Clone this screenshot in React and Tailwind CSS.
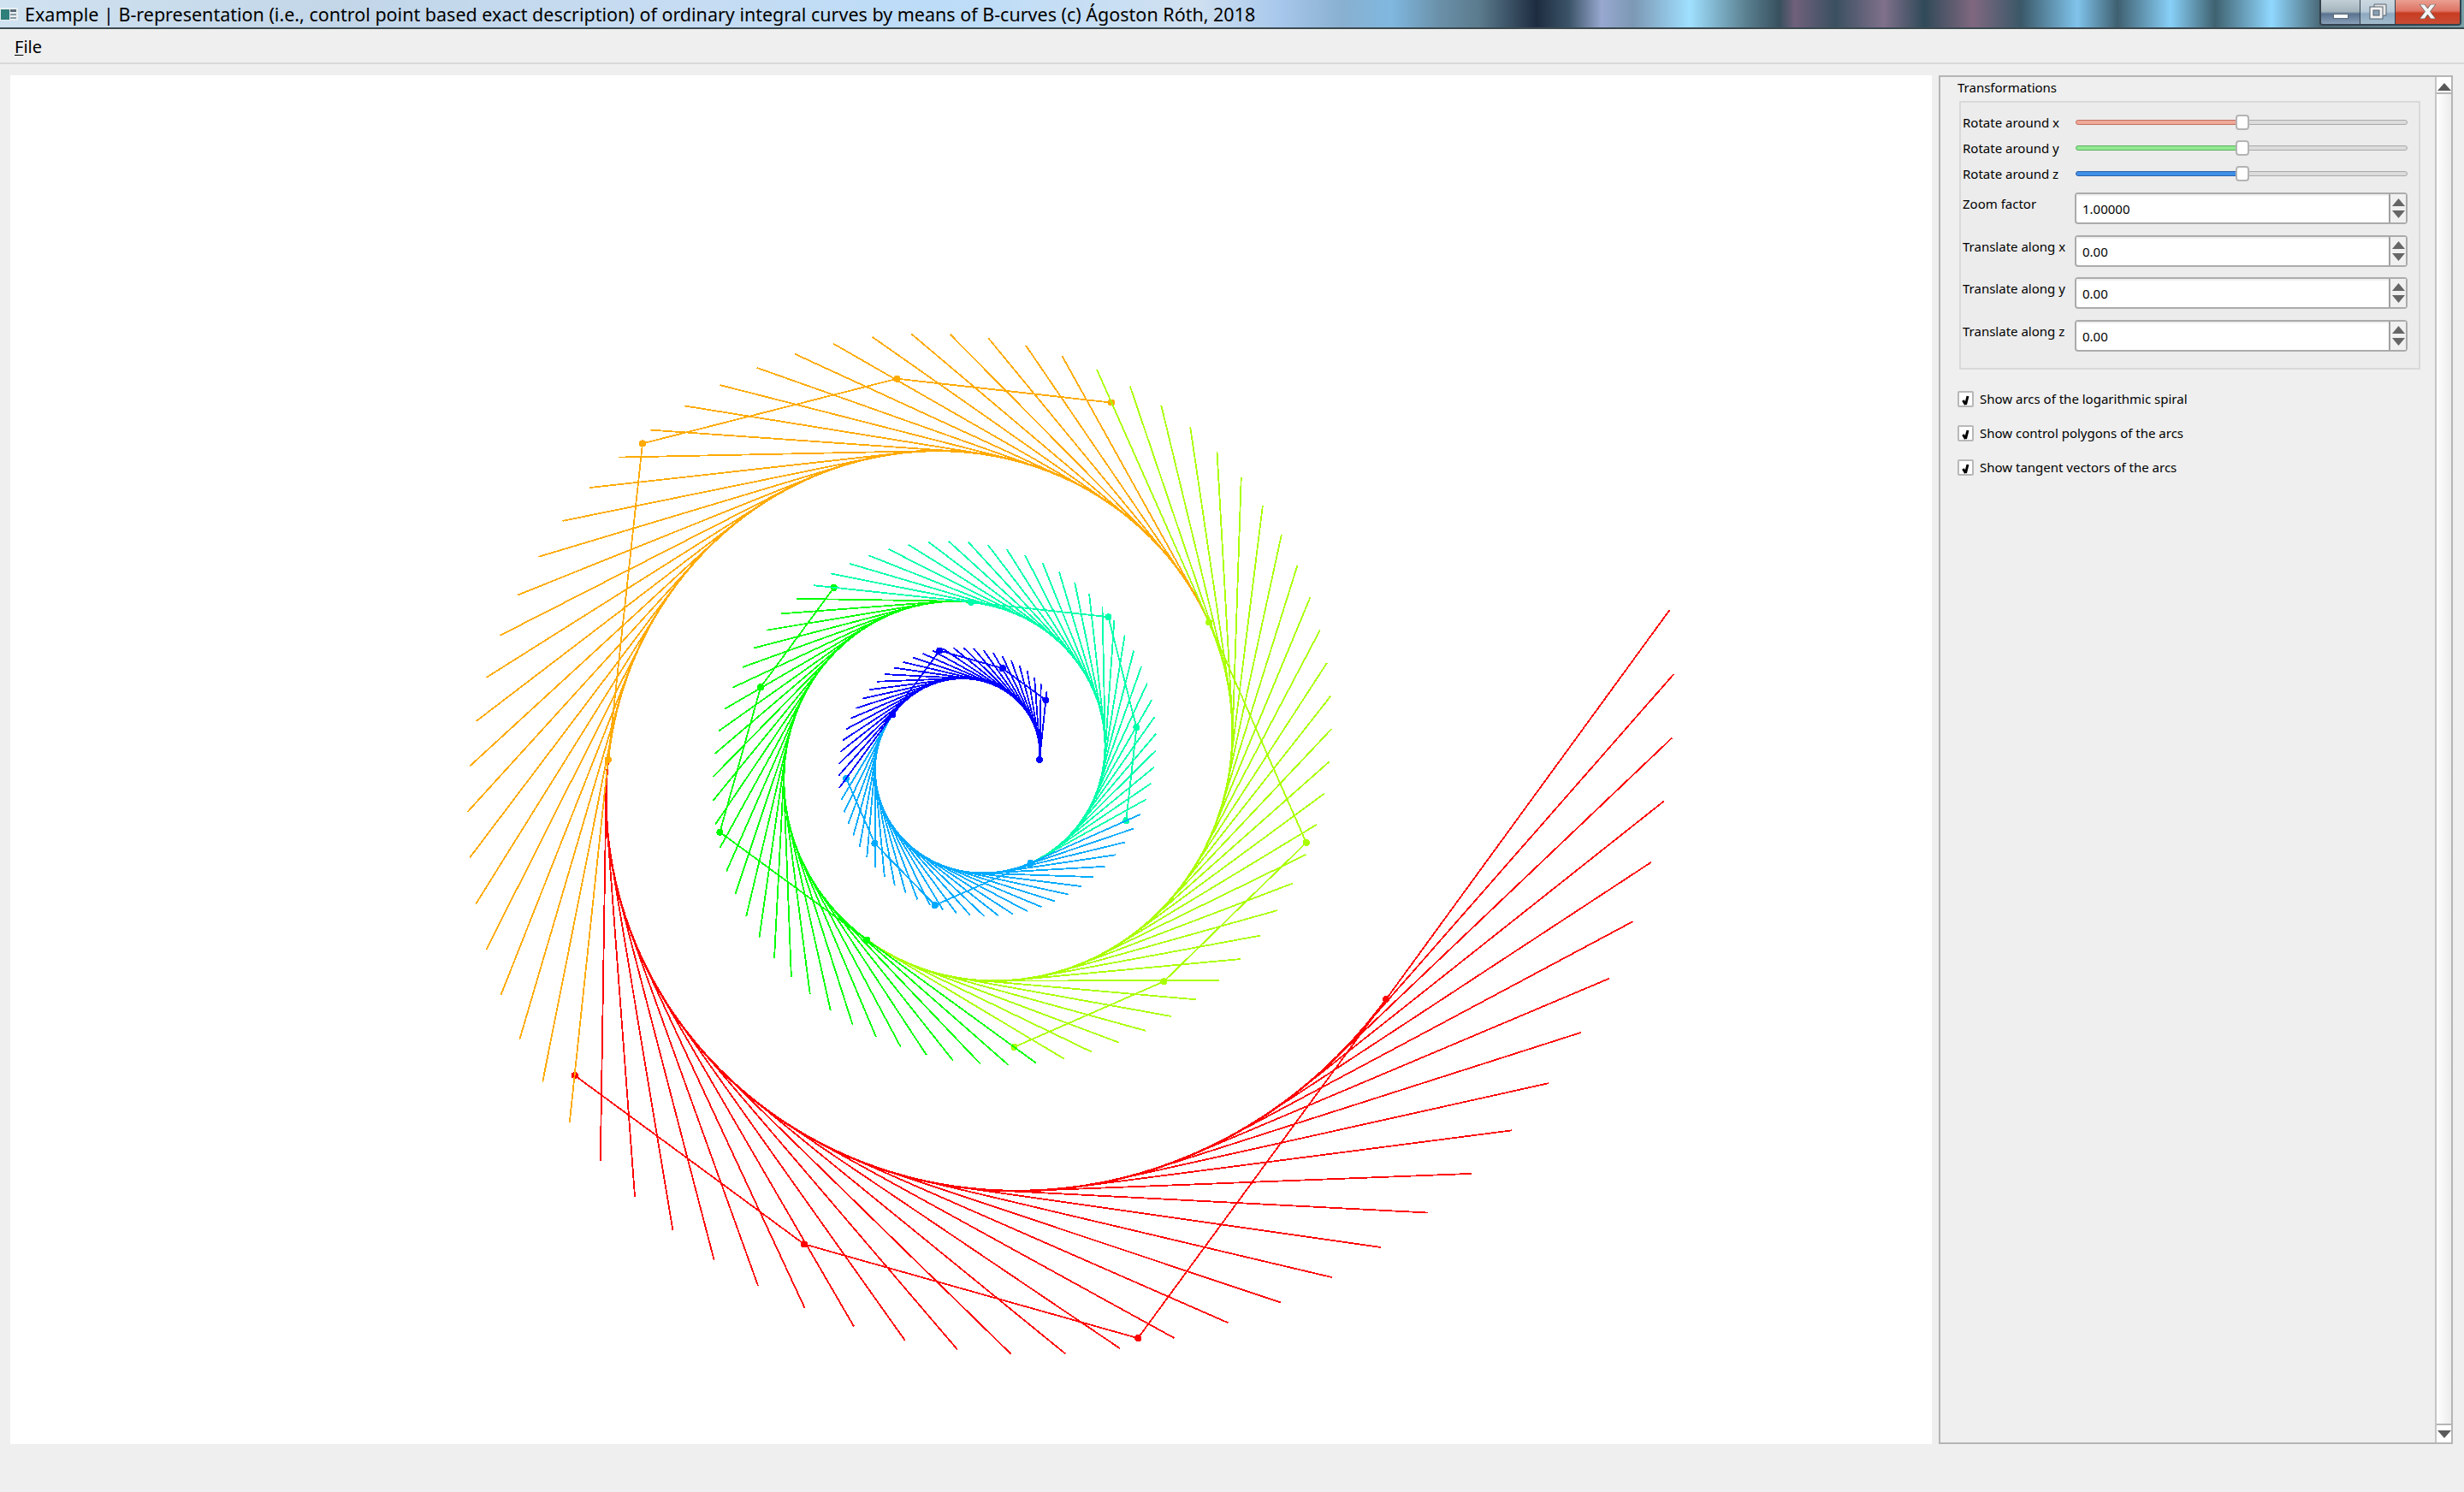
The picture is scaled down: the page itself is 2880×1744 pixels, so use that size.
import React from 'react';

const uiFont = "font-['Noto_Sans',sans-serif]";

// logarithmic spiral, one arc per 150 degrees
const CX = 1123;
const CY = 800;
const R0 = 80;
const B = 0.1062;
const STEP = (5 * Math.PI) / 6;
const SAMPLES = 29;
const arcColors = ['#0000ff', '#00aaff', '#00ffaa', '#00ff00', '#aaff00', '#ffaa00', '#ff0000'];
// control points of an arc, relative to its start point (complex factors)
const CTRL = [[1.092, -0.87], [0.46, -1.335], [-0.46, -1.594]];

const spiral = (t) => {
  const r = R0 * Math.exp(B * t);
  return [CX + r * Math.cos(t), CY - r * Math.sin(t)];
};

const tangent = (t) => {
  const r = R0 * Math.exp(B * t);
  return [r * (B * Math.cos(t) - Math.sin(t)), r * (-B * Math.sin(t) - Math.cos(t))];
};

const buildArc = (n) => {
  const t0 = n * STEP;
  const samples = [];
  for (let i = 0; i <= SAMPLES; i++) samples.push(t0 + (i * STEP) / SAMPLES);
  const fine = [];
  for (let i = 0; i <= 150; i++) fine.push(spiral(t0 + (i * STEP) / 150));
  const [sx, sy] = spiral(t0);
  const zx = sx - CX;
  const zy = sy - CY;
  const inner = CTRL.map(([a, b]) => [CX + zx * a - zy * b, CY + zx * b + zy * a]);
  return { samples, fine, polygon: [[sx, sy], ...inner, spiral(t0 + STEP)] };
};

const pts = (list) => list.map((p) => `${p[0].toFixed(1)},${p[1].toFixed(1)}`).join(' ');

const SpiralPlot = () => (
  <svg className="block w-full h-full" viewBox="0 0 2246 1600" shapeRendering="crispEdges" fill="none">
    {[6, 5, 4, 3, 2, 1, 0].map((n) => {
      const arc = buildArc(n);
      const color = arcColors[n];
      // first leg of a polygon lies under the last tangent of the arc before it
      const legs = n === 0 ? arc.polygon : arc.polygon.slice(1);
      return (
        <g key={n} stroke={color}>
          <polyline points={pts(arc.fine)} strokeWidth="2.5" />
          <polyline points={pts(legs)} strokeWidth="1.8" />
          {arc.samples.map((t, i) => {
            const [x, y] = spiral(t);
            const [dx, dy] = tangent(t);
            return <line key={i} x1={x} y1={y} x2={x + dx} y2={y + dy} strokeWidth="1.8" />;
          })}
          {arc.polygon.map((p, i) => (
            <circle key={i} cx={p[0]} cy={p[1]} r="4" fill={color} stroke="none" />
          ))}
        </g>
      );
    })}
  </svg>
);

const Slider = ({ fill, edge }) => (
  <div className="flex-1 flex items-center relative h-[18px]">
    <div className={`h-[6px] w-[189px] rounded-l-full border ${edge} ${fill}`} />
    <div className="h-[6px] flex-1 rounded-r-full border border-[#aaaaaa] bg-[#dcdcdc]" />
    <div className="absolute left-[187px] top-0 w-[16px] h-[18px] rounded-[4px] border-2 border-[#b4b4b4] bg-white" />
  </div>
);

const SpinBox = ({ value }) => (
  <div className="flex-1 h-[37px] flex rounded-[4px] border-2 border-[#ababab] bg-white">
    <div className="flex-1 pl-[7px] leading-[31px] text-[15px] text-black border-t-2 border-[#f0f0f0]">{value}</div>
    <div className="w-[20px] flex flex-col items-center justify-center gap-[5px] bg-[#f0f0f0] border-l-2 border-[#a0a0a0]">
      <svg width="15" height="9" viewBox="0 0 15 9"><path d="M7.5 0 15 9H0z" fill="#666" /></svg>
      <svg width="15" height="9" viewBox="0 0 15 9"><path d="M0 0h15L7.5 9z" fill="#666" /></svg>
    </div>
  </div>
);

const CheckRow = ({ label }) => (
  <div className="flex items-center h-[19px]">
    <div className="w-[19px] h-[19px] flex items-center justify-center border-2 border-[#b8b8b8] rounded-[2px] bg-white">
      <svg width="15" height="15" viewBox="0 0 15 15" fill="none">
        <path d="M4.500 9 7.500 14" stroke="#000" strokeWidth="3" />
        <path d="M7.500 14 10 4" stroke="#000" strokeWidth="3" />
      </svg>
    </div>
    <span className="ml-[7px] text-[15px] leading-[19px] text-black">{label}</span>
  </div>
);

const TitleBar = () => (
  <div className="relative h-[34px] flex border-b-2 border-[#3c4a50] bg-[linear-gradient(90deg,#d0e2f0_0px,#c2d6e8_400px,#c6dcf2_800px,#bcdcf8_1100px,#cfe0f0_1400px,#a8c8ec_1494px,#88b0d0_1570px,#80b8e0_1626px,#6a90a8_1683px,#5a7a8c_1730px,#1e2c40_1796px,#3c5468_1834px,#98a8d0_1872px,#7c98b4_1909px,#a0e0ff_1975px,#5a8090_2041px,#38505e_2080px,#70607c_2098px,#3a5060_2145px,#80708c_2202px,#304a58_2249px,#806880_2306px,#3a5868_2362px,#80c4ec_2428px,#3f6070_2475px,#88d0f8_2537px,#3f6270_2589px,#90d8ff_2655px,#4a6a78_2711px,#7aa0a8_2880px)]">
    <svg className="mt-[9px] shrink-0" width="21" height="15" viewBox="0 0 21 15">
      <rect width="21" height="15" fill="#e8eef0" />
      <rect x="1" y="2" width="10" height="12" fill="#2f7f7a" />
      <rect x="12" y="2" width="7" height="3" fill="#5a6a78" />
      <rect x="12" y="7" width="7" height="2" fill="#8a9aa8" />
      <rect x="12" y="11" width="7" height="2" fill="#8a9aa8" />
    </svg>
    <div className="ml-[8px] leading-[34px] text-[21.5px] text-black whitespace-nowrap">
      Example | B-representation (i.e., control point based exact description) of ordinary integral curves by means of B-curves (c) Ágoston Róth, 2018
    </div>
    <div className="absolute right-[3px] top-0 h-[30px] flex rounded-b-[4px] border-2 border-t-0 border-[#33424e] overflow-hidden">
      <div className="w-[45px] flex items-center justify-center bg-[linear-gradient(180deg,#c2ced6_0%,#a4b4bc_48%,#5a7290_58%,#8aa0b8_100%)]">
        <div className="mt-[9px] w-[18px] h-[6px] bg-white border border-[#5a6a78]" />
      </div>
      <div className="w-[42px] flex items-start justify-center border-l border-r border-[#33424e] bg-[linear-gradient(180deg,#ccd8e0_0%,#b8cad8_48%,#8ca8c0_58%,#a4bccc_100%)]">
        <svg className="mt-[4px]" width="21" height="19" viewBox="0 0 21 19" fill="none">
          <path d="M6 4V1h14v13h-3" fill="#e8e8e8" stroke="#55626e" strokeWidth="1" />
          <rect x="1" y="4" width="15" height="14" fill="#f2f2f2" stroke="#55626e" />
          <rect x="5" y="8" width="7" height="6" fill="#8aa0b4" stroke="#55626e" />
        </svg>
      </div>
      <div className="w-[75px] flex items-start justify-center bg-[linear-gradient(180deg,#ea9f90_0%,#de7464_45%,#c83c22_55%,#c84c34_100%)]">
        <svg className="mt-[5px]" width="19" height="17" viewBox="0 0 19 17">
          <path d="M0 0h6l3.5 5L13 0h6l-6.5 8.500L19 17h-6l-3.500-5L6 17H0l6.500-8.500z" fill="#f4f4f4" stroke="#5a5a5a" strokeWidth="0.8" />
        </svg>
      </div>
    </div>
  </div>
);

const App = () => {
  return (
    <div className={`w-[2880px] h-[1744px] bg-[#efefef] overflow-hidden ${uiFont}`}>
      <TitleBar />

      <div className="h-[41px] pl-[17px] border-b-2 border-[#d9d9d9] leading-[42px] text-[20px] text-black">
        <span className="underline underline-offset-2 decoration-1">F</span>ile
      </div>

      <div className="flex gap-[8px] pl-[12px] pt-[13px]">
        <div className="w-[2246px] h-[1600px] bg-white">
          <SpiralPlot />
        </div>

        <div className="w-[601px] h-[1600px] flex border-2 border-[#b5b5b5]">
          <div className="flex-1 pl-[20px]">
            <div className="h-[28px] leading-[25px] text-[15px] text-black">Transformations</div>
            <div className="ml-[2px] w-[539px] h-[314px] border-2 border-[#d9d9d9] bg-[#ececec] pl-[2px] pr-[13px] pt-[8px]">
              {['Rotate around x', 'Rotate around y', 'Rotate around z'].map((label, i) => (
                <div key={label} className="flex items-center h-[30px]">
                  <div className="w-[132px] text-[15px] leading-[28px] text-black">{label}</div>
                  <Slider
                    fill={['bg-[#f0a898]', 'bg-[#90e890]', 'bg-[#4090e8]'][i]}
                    edge={['border-[#c07060]', 'border-[#60b060]', 'border-[#2a60a8]'][i]}
                  />
                </div>
              ))}
              <div className="mt-[7px] flex flex-col gap-[12.7px]">
                {[['Zoom factor', '1.00000'], ['Translate along x', '0.00'], ['Translate along y', '0.00'], ['Translate along z', '0.00']].map(([label, value]) => (
                  <div key={label} className="flex">
                    <div className="w-[131px] pt-[2px] text-[15px] text-black whitespace-nowrap">{label}</div>
                    <SpinBox value={value} />
                  </div>
                ))}
              </div>
            </div>
            <div className="mt-[25px] flex flex-col gap-[21px]">
              <CheckRow label="Show arcs of the logarithmic spiral" />
              <CheckRow label="Show control polygons of the arcs" />
              <CheckRow label="Show tangent vectors of the arcs" />
            </div>
          </div>

          <div className="w-[19px] flex flex-col border-l-2 border-[#c4c4c4]">
            <div className="h-[20px] flex items-start justify-center pt-[7px] bg-white border-b-2 border-[#b5b5b5]">
              <svg width="16" height="9" viewBox="0 0 16 9"><path d="M8 0 16 9H0z" fill="#5a5a5a" /></svg>
            </div>
            <div className="flex-1 bg-gradient-to-r from-white to-[#ececec]" />
            <div className="h-[22px] flex items-start justify-center pt-[6px] bg-white border-t-2 border-[#b5b5b5]">
              <svg width="16" height="9" viewBox="0 0 16 9"><path d="M0 0h16L8 9z" fill="#5a5a5a" /></svg>
            </div>
          </div>
        </div>
      </div>
    </div>
  );
};

export default App;
